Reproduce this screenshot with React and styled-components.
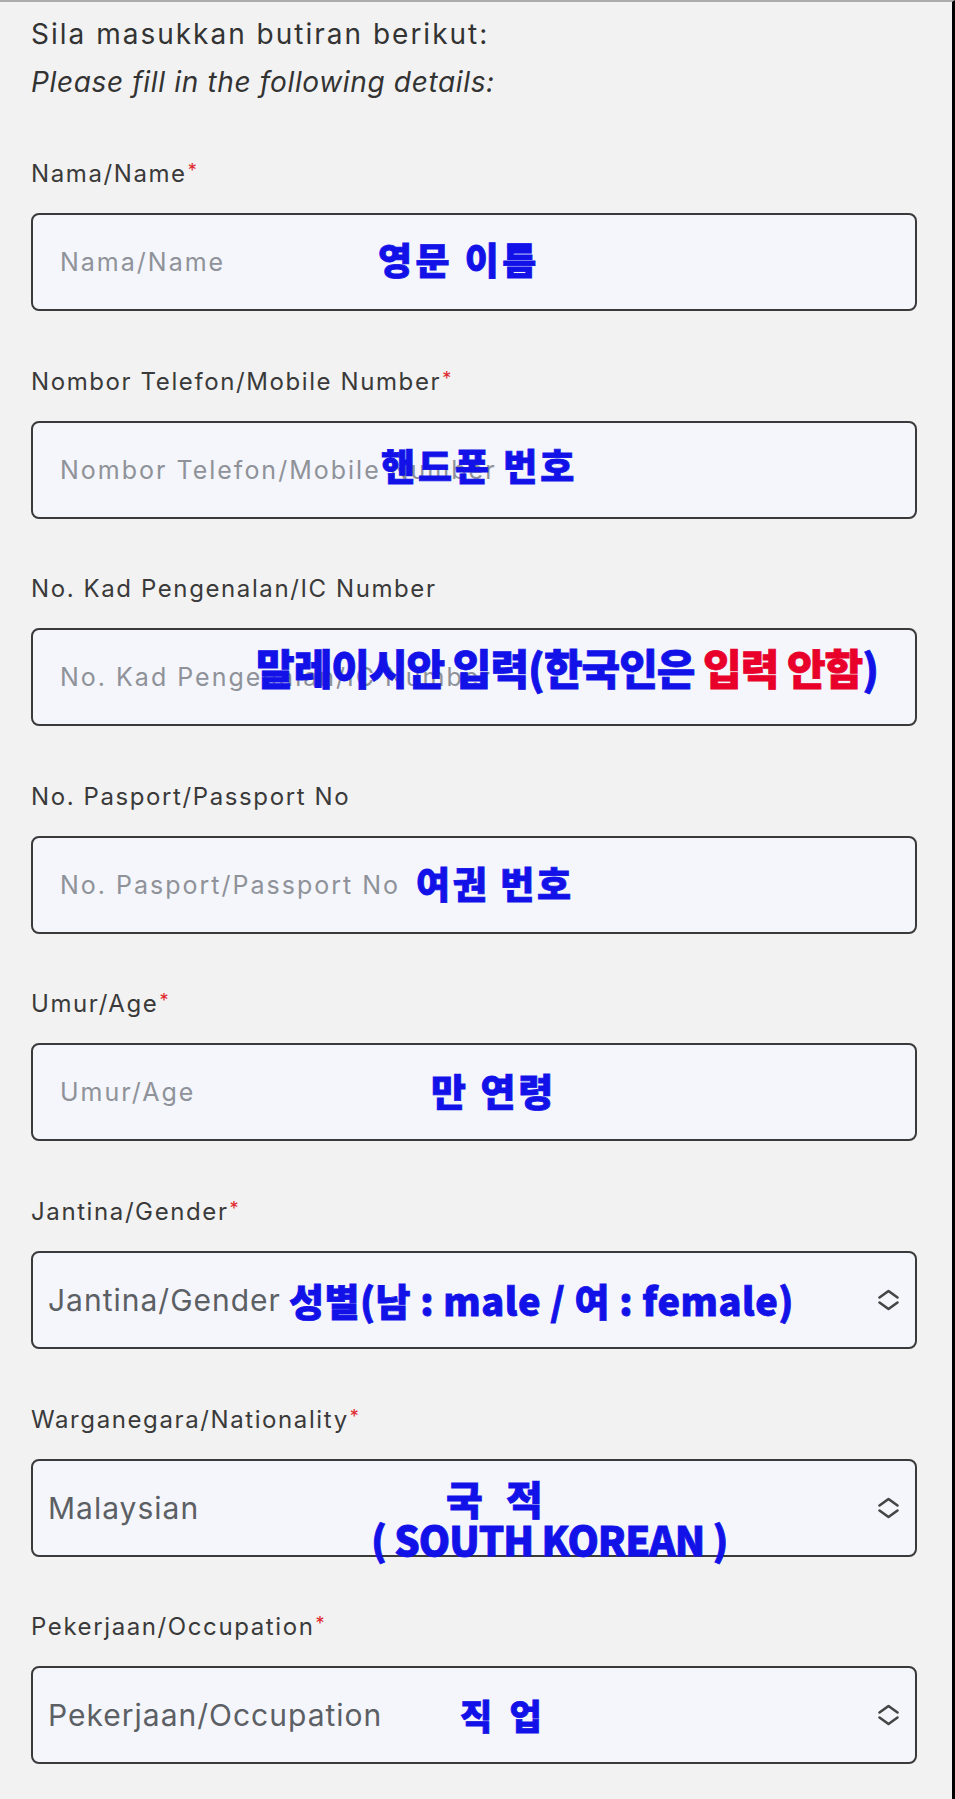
import React from 'react';
import styled, { createGlobalStyle } from 'styled-components';

const App = () => {
  return (
    <Page>
      <GlobalStyle />
      <Intro>
        <IntroLine>Sila masukkan butiran berikut:</IntroLine>
        <IntroLine $italic>Please fill in the following details:</IntroLine>
      </Intro>

      {fields.map((field) => (
        <Field key={field.label}>
          <Label>
            {field.label}
            {field.required && <Star>*</Star>}
          </Label>
          <Control>
            {field.options ? (
              <>
                <Select defaultValue={field.options[0]}>
                  {field.options.map((opt) => (
                    <option key={opt} value={opt}>
                      {opt}
                    </option>
                  ))}
                </Select>
                <Chevron viewBox="0 0 23 22" fill="none">
                  <path d="M2.5 8.5 L11.5 2 L20.5 8.5" />
                  <path d="M2.5 13.5 L11.5 20 L20.5 13.5" />
                </Chevron>
              </>
            ) : (
              <TextInput type="text" placeholder={field.placeholder} />
            )}
            {field.notes.map((note, i) => (
              <Note key={i} $x={note.x} $y={note.y} $size={note.size} $spacing={note.spacing}>
                {note.text}
              </Note>
            ))}
          </Control>
        </Field>
      ))}
    </Page>
  );
};

const GlobalStyle = createGlobalStyle`
  html, body {
    margin: 0;
    padding: 0;
  }
  body {
    background: #f2f2f2;
    overflow: hidden;
  }
  * {
    box-sizing: border-box;
  }
`;

const Page = styled.div`
  min-height: 100vh;
  background: #f2f2f2;
  border-top: 2px solid #acacac;
  border-right: 3px solid #000;
  padding: 8px 35px 0 31px;
  font-family: Inter, 'Liberation Sans', sans-serif;
`;

const Intro = styled.div`
  margin-bottom: 53px;
  color: #333333;
  font-size: 28px;
  line-height: 48px;
`;

const IntroLine = styled.div`
  font-style: ${({ $italic }) => ($italic ? 'italic' : 'normal')};
  letter-spacing: ${({ $italic }) => ($italic ? '0.65px' : '2px')};
`;

const Field = styled.div`
  margin-bottom: 55.6px;
`;

const Label = styled.label`
  display: block;
  margin-bottom: 24px;
  color: #3a3a3a;
  font-size: 24px;
  line-height: 30px;
  letter-spacing: 1.6px;
`;

const Star = styled.span`
  margin-left: 1px;
  color: #e0262b;
  font-size: 18px;
  line-height: 0;
  vertical-align: 5px;
  letter-spacing: 0;
`;

const Control = styled.div`
  position: relative;
  height: 98px;
`;

const TextInput = styled.input`
  width: 100%;
  height: 100%;
  padding: 0 0 0 27px;
  border: 2px solid #3a3a3a;
  border-radius: 8px;
  background: #f4f6fc;
  color: #333333;
  font-family: inherit;
  font-size: 25px;
  letter-spacing: 2px;
  outline: none;

  &::placeholder {
    color: #8f9298;
  }
`;

const Select = styled.select`
  width: 100%;
  height: 100%;
  padding: 0 60px 0 15px;
  border: 2px solid #3a3a3a;
  border-radius: 8px;
  background: #f4f6fc;
  color: #5c5f64;
  font-family: inherit;
  font-size: 30px;
  letter-spacing: 1px;
  appearance: none;
  -webkit-appearance: none;
  outline: none;
`;

const Chevron = styled.svg`
  position: absolute;
  top: 50%;
  right: 17px;
  width: 23px;
  height: 22px;
  margin-top: -11px;
  stroke: #454545;
  stroke-width: 2.6;
  stroke-linecap: round;
  stroke-linejoin: round;
  pointer-events: none;
`;

const Note = styled.span`
  position: absolute;
  top: ${({ $y }) => $y}px;
  left: ${({ $x }) => $x}px;
  color: #1212e8;
  font-family: 'Noto Sans CJK KR', 'Noto Sans', sans-serif;
  font-size: ${({ $size }) => $size}px;
  font-weight: 900;
  line-height: 1;
  letter-spacing: ${({ $spacing }) => $spacing || 0}px;
  white-space: nowrap;
  -webkit-text-stroke: 0.8px currentColor;
  pointer-events: none;
`;

const Red = styled.span`
  color: #e8002b;
`;

const fields = [
  {
    label: 'Nama/Name',
    required: true,
    placeholder: 'Nama/Name',
    notes: [{ text: '영문 이름', x: 347, y: 28, size: 37, spacing: 3.4 }],
  },
  {
    label: 'Nombor Telefon/Mobile Number',
    required: true,
    placeholder: 'Nombor Telefon/Mobile Number',
    notes: [{ text: '핸드폰 번호', x: 350, y: 26, size: 37, spacing: 2.9 }],
  },
  {
    label: 'No. Kad Pengenalan/IC Number',
    placeholder: 'No. Kad Pengenalan/IC Number',
    notes: [
      {
        text: (
          <>
            말레이시안 입력(한국인은 <Red>입력 안함</Red>)
          </>
        ),
        x: 225,
        y: 18,
        size: 42,
        spacing: -1,
      },
    ],
  },
  {
    label: 'No. Pasport/Passport No',
    placeholder: 'No. Pasport/Passport No',
    notes: [{ text: '여권 번호', x: 385, y: 29, size: 37, spacing: 2.6 }],
  },
  {
    label: 'Umur/Age',
    required: true,
    placeholder: 'Umur/Age',
    notes: [{ text: '만 연령', x: 400, y: 28, size: 38, spacing: 2.9 }],
  },
  {
    label: 'Jantina/Gender',
    required: true,
    options: ['Jantina/Gender', 'Lelaki/Male', 'Perempuan/Female'],
    notes: [{ text: '성별(남 : male / 여 : female)', x: 258, y: 30, size: 38, spacing: 0.5 }],
  },
  {
    label: 'Warganegara/Nationality',
    required: true,
    options: ['Malaysian', 'Bukan Warganegara/Non-Malaysian'],
    notes: [
      { text: '국 적', x: 415, y: 19, size: 40, spacing: 7 },
      { text: '( SOUTH KOREAN )', x: 340, y: 60, size: 40, spacing: -1 },
    ],
  },
  {
    label: 'Pekerjaan/Occupation',
    required: true,
    options: ['Pekerjaan/Occupation', 'Pelajar/Student', 'Bekerja/Employed', 'Lain-lain/Others'],
    notes: [{ text: '직 업', x: 429, y: 31, size: 35, spacing: 4.7 }],
  },
];

export default App;
